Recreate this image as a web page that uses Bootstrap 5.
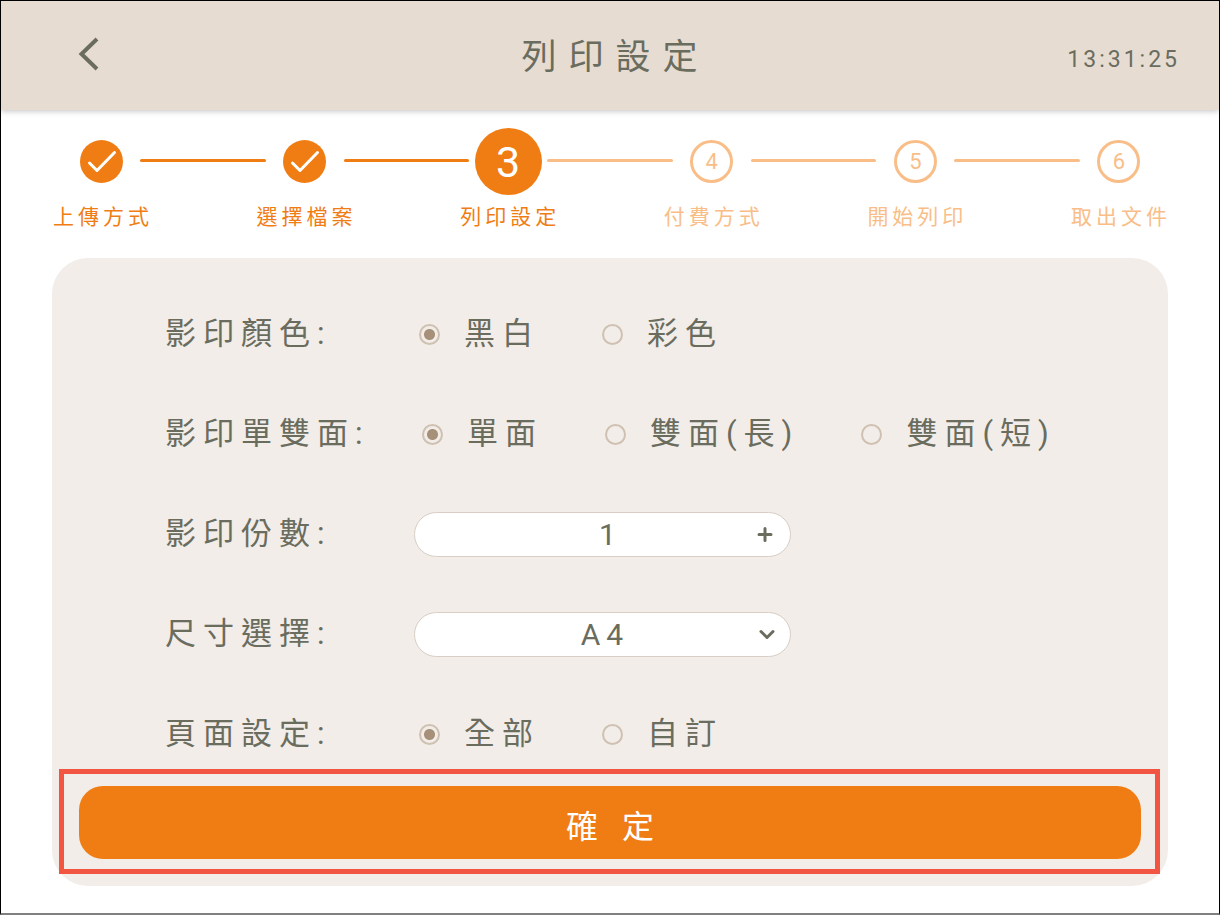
<!DOCTYPE html>
<html lang="zh-Hant">
<head>
<meta charset="utf-8">
<meta name="viewport" content="width=device-width, initial-scale=1">
<title>列印設定</title>
<link rel="stylesheet" href="https://cdn.jsdelivr.net/npm/bootstrap@5.3.0/dist/css/bootstrap.min.css">
<style>
:root {
  --ink: #6a6c5e;
  --orange: #f07d14;
  --orange-soft: #f9be88;
  --panel: #f2ede9;
  --ring: #cfc1b1;
}
body {
  font-family: Roboto, "Noto Sans CJK TC", sans-serif;
  color: var(--ink);
}
.kiosk { border: 1px solid #000; border-bottom: 2px solid #808080; }
.topbar {
  grid-template-columns: 1fr auto 1fr;
  height: 109px;
  padding: 0 39px 0 38px;
  background: #e6dcd2;
  box-shadow: 0 1px 6px rgba(0, 0, 0, .25);
}
.back-btn { width: 32px; height: 40px; margin: 0 0 6px 32px; color: var(--ink); }
.title-text { font-size: 35px; letter-spacing: 12px; padding: 4px 0 0 12px; }
.clock { font-size: 23px; letter-spacing: 3px; padding-top: 10px; }

.steps { padding: 17px 61px 0; }
.step { width: 78px; color: var(--orange); }
.step-mark { height: 68px; }
.dot {
  width: 43px;
  height: 43px;
  border: 3px solid currentColor;
  border-radius: 50%;
  font-size: 22px;
}
.done .dot { background: var(--orange); border: 0; }
.current .dot { width: 67px; height: 67px; padding-top: 3px; background: var(--orange); border: 0; }
.current .dot span { color: #fff; font-size: 43px; }
.step-name { font-size: 21px; line-height: 32px; letter-spacing: 4px; margin-top: 6px; padding-left: 4px; }
.waiting { color: var(--orange-soft); }
.bar { height: 3px; margin-top: 32px; border-radius: 2px; background: var(--orange); }
.bar.ahead { background: var(--orange-soft); }

.panel {
  margin: 25px 51px 27px;
  padding: 46px 8px 12px 7px;
  border-radius: 36px;
  background: var(--panel);
}
.fields { gap: 40px; padding-left: 106px; font-size: 31px; letter-spacing: 7px; }
.field-row { height: 60px; }
.field-name { width: 249px; }
.choices { gap: 62px; padding-left: 5px; }
.choices.sides { padding-left: 8px; }
.choice { gap: 24px; }
.form-check-input.pick {
  width: 21px;
  height: 21px;
  margin: 0;
  border: 2px solid var(--ring);
  background: transparent;
  box-shadow: none;
}
.form-check-input.pick:checked {
  background: radial-gradient(circle, #a69178 5px, transparent 6px);
}
.pill-box { width: 377px; }
.pill {
  height: 45px;
  padding: 0 0 0 5px;
  border: 1px solid #d8cec4;
  border-radius: 23px;
  background: #fff;
  color: var(--ink);
  font-size: 30px;
  line-height: 43px;
  letter-spacing: 6px;
  text-align: center;
  text-align-last: center;
  appearance: none;
}
.pill-count { padding-left: 16px; }
.pill-icon { right: 16px; width: 20px; height: 20px; color: var(--ink); }
.pill-icon svg { display: block; }

.callout { margin-top: 5px; border: 5px solid #f25542; padding: 12px 14px 10px 15px; }
.confirm, .confirm:hover {
  height: 73px;
  padding: 8px 0 0 8px;
  border: 0;
  border-radius: 24px;
  background: var(--orange);
  color: #fff;
  font-size: 32px;
  letter-spacing: 8px;
}
</style>
</head>
<body>
<div class="kiosk min-vh-100 d-flex flex-column bg-white">
  <header class="topbar d-grid align-items-center">
    <button type="button" class="back-btn btn p-0" aria-label="返回">
      <svg width="32" height="40" viewBox="0 0 32 40" fill="none" stroke="currentColor" stroke-width="4"><path d="M25 5 9.500 20 25 35"/></svg>
    </button>
    <h1 class="title-text fw-normal m-0">列印設定</h1>
    <time class="clock text-end">13:31:25</time>
  </header>

  <ol class="steps list-unstyled d-flex m-0">
    <li class="step done flex-shrink-0 d-flex flex-column align-items-center">
      <div class="step-mark d-flex align-items-center"><div class="dot"><svg class="d-block" width="43" height="43" viewBox="0 0 43 43" fill="none" stroke="#fff" stroke-width="3" stroke-linecap="round" stroke-linejoin="round"><path d="M9.500 23 17 30.500 34.500 12.500"/></svg></div></div>
      <div class="step-name text-nowrap">上傳方式</div>
    </li>
    <li class="bar flex-fill" aria-hidden="true"></li>
    <li class="step done flex-shrink-0 d-flex flex-column align-items-center">
      <div class="step-mark d-flex align-items-center"><div class="dot"><svg class="d-block" width="43" height="43" viewBox="0 0 43 43" fill="none" stroke="#fff" stroke-width="3" stroke-linecap="round" stroke-linejoin="round"><path d="M9.500 23 17 30.500 34.500 12.500"/></svg></div></div>
      <div class="step-name text-nowrap">選擇檔案</div>
    </li>
    <li class="bar flex-fill" aria-hidden="true"></li>
    <li class="step current flex-shrink-0 d-flex flex-column align-items-center" aria-current="step">
      <div class="step-mark d-flex align-items-center"><div class="dot d-flex align-items-center justify-content-center"><span>3</span></div></div>
      <div class="step-name text-nowrap">列印設定</div>
    </li>
    <li class="bar ahead flex-fill" aria-hidden="true"></li>
    <li class="step waiting flex-shrink-0 d-flex flex-column align-items-center">
      <div class="step-mark d-flex align-items-center"><div class="dot d-flex align-items-center justify-content-center">4</div></div>
      <div class="step-name text-nowrap">付費方式</div>
    </li>
    <li class="bar ahead flex-fill" aria-hidden="true"></li>
    <li class="step waiting flex-shrink-0 d-flex flex-column align-items-center">
      <div class="step-mark d-flex align-items-center"><div class="dot d-flex align-items-center justify-content-center">5</div></div>
      <div class="step-name text-nowrap">開始列印</div>
    </li>
    <li class="bar ahead flex-fill" aria-hidden="true"></li>
    <li class="step waiting flex-shrink-0 d-flex flex-column align-items-center">
      <div class="step-mark d-flex align-items-center"><div class="dot d-flex align-items-center justify-content-center">6</div></div>
      <div class="step-name text-nowrap">取出文件</div>
    </li>
  </ol>

  <form class="panel">
    <div class="fields d-flex flex-column">
      <div class="field-row d-flex align-items-center" role="radiogroup" aria-labelledby="color-name">
        <div class="field-name" id="color-name">影印顏色:</div>
        <div class="choices d-flex">
          <div class="choice d-flex align-items-center"><input class="form-check-input pick" type="radio" name="color" id="mono" checked><label for="mono">黑白</label></div>
          <div class="choice d-flex align-items-center"><input class="form-check-input pick" type="radio" name="color" id="full"><label for="full">彩色</label></div>
        </div>
      </div>
      <div class="field-row d-flex align-items-center" role="radiogroup" aria-labelledby="sides-name">
        <div class="field-name" id="sides-name">影印單雙面:</div>
        <div class="choices sides d-flex">
          <div class="choice d-flex align-items-center"><input class="form-check-input pick" type="radio" name="sides" id="single" checked><label for="single">單面</label></div>
          <div class="choice d-flex align-items-center"><input class="form-check-input pick" type="radio" name="sides" id="long"><label for="long">雙面(長)</label></div>
          <div class="choice d-flex align-items-center"><input class="form-check-input pick" type="radio" name="sides" id="short"><label for="short">雙面(短)</label></div>
        </div>
      </div>
      <div class="field-row d-flex align-items-center">
        <label class="field-name" for="copies">影印份數:</label>
        <div class="pill-box position-relative d-flex align-items-center">
          <input class="pill pill-count w-100" type="text" inputmode="numeric" id="copies" value="1">
          <button type="button" class="pill-icon btn p-0 border-0 position-absolute" aria-label="增加份數">
            <svg width="20" height="20" viewBox="0 0 20 20" fill="none" stroke="currentColor" stroke-width="3" stroke-linecap="round"><path d="M4 10.500h12M10 4.500v12"/></svg>
          </button>
        </div>
      </div>
      <div class="field-row d-flex align-items-center">
        <label class="field-name" for="size">尺寸選擇:</label>
        <div class="pill-box position-relative d-flex align-items-center">
          <select class="pill w-100" id="size"><option>A4</option><option>A3</option></select>
          <span class="pill-icon position-absolute pe-none">
            <svg width="20" height="20" viewBox="0 0 20 20" fill="none" stroke="currentColor" stroke-width="3" stroke-linecap="round" stroke-linejoin="round"><path d="M6 7.500 12 13.500 18 7.500"/></svg>
          </span>
        </div>
      </div>
      <div class="field-row d-flex align-items-center" role="radiogroup" aria-labelledby="pages-name">
        <div class="field-name" id="pages-name">頁面設定:</div>
        <div class="choices d-flex">
          <div class="choice d-flex align-items-center"><input class="form-check-input pick" type="radio" name="pages" id="all" checked><label for="all">全部</label></div>
          <div class="choice d-flex align-items-center"><input class="form-check-input pick" type="radio" name="pages" id="custom"><label for="custom">自訂</label></div>
        </div>
      </div>
    </div>
    <div class="callout">
      <button type="button" class="confirm btn w-100">確 定</button>
    </div>
  </form>
</div>
<script src="https://cdn.jsdelivr.net/npm/bootstrap@5.3.0/dist/js/bootstrap.bundle.min.js"></script>
</body>
</html>
